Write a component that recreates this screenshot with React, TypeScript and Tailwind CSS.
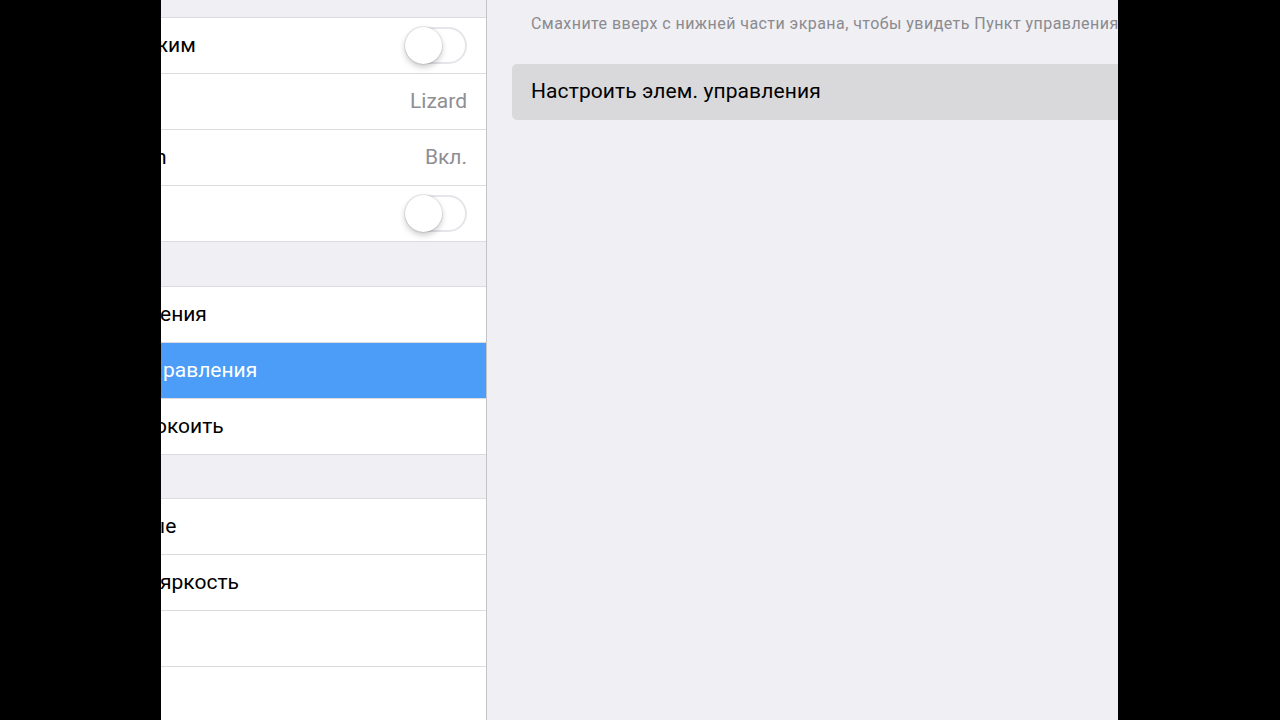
import React from "react";

const font = { fontFamily: "Roboto, 'Noto Sans', sans-serif" };

function Toggle() {
  return (
    <div className="relative h-[37px] w-[62px] rounded-full border-2 border-[#e5e5ea] bg-white">
      <div className="absolute left-[-2px] top-[-2px] h-[37px] w-[37px] rounded-full bg-white shadow-[0_3px_6px_rgba(0,0,0,0.22),0_0_0_1px_rgba(0,0,0,0.08)]" />
    </div>
  );
}

function Row({
  text,
  ml = "",
  value,
  toggle,
  active,
}: {
  text?: string;
  ml?: string;
  value?: string;
  toggle?: boolean;
  active?: boolean;
}) {
  return (
    <div
      className={`flex h-[56px] items-center justify-between border-b border-[#dcdce0] pr-[19px] ${
        active ? "bg-[#4c9df7]" : "bg-white"
      }`}
    >
      <span
        className={`whitespace-nowrap text-[21px] ${ml} ${active ? "text-white" : "text-black"}`}
      >
        {text}
      </span>
      {value && <span className="text-[21px] text-[#8e8e93]">{value}</span>}
      {toggle && <Toggle />}
    </div>
  );
}

export default function App() {
  return (
    <div className="flex h-[720px] w-[1280px] overflow-hidden bg-black" style={font}>
      <div className="w-[161px] shrink-0 bg-black" />
      <div className="flex w-[325px] shrink-0 flex-col overflow-hidden bg-[#efeff4]">
        <div className="h-[17px] shrink-0" />
        <div className="border-t border-[#dcdce0]">
          <Row text="жим" ml="ml-[-9px]" toggle />
          <Row text="" value="Lizard" />
          <Row text="h" ml="ml-[-6px]" value="Вкл." />
          <Row text="" toggle />
        </div>
        <div className="h-[44px] shrink-0" />
        <div className="border-t border-[#dcdce0]">
          <Row text="ения" ml="ml-[-1px]" />
          <Row text="равления" ml="ml-[2px]" active />
          <Row text="окоить" ml="ml-[-6px]" />
        </div>
        <div className="h-[43px] shrink-0" />
        <div className="border-t border-[#dcdce0]">
          <Row text="ые" ml="ml-[-12px]" />
          <Row text="яркость" ml="ml-[-1px]" />
          <Row text="" />
          <Row text="" />
        </div>
      </div>
      <div className="w-px shrink-0 bg-[#c4c4c8]" />
      <div className="flex w-[631px] shrink-0 flex-col overflow-hidden bg-[#efeff4]">
        <div className="h-[44px] whitespace-nowrap pl-[44px] pt-[12px] text-[16px] tracking-[0.45px] text-[#8a8a8f]">
          Смахните вверх с нижней части экрана, чтобы увидеть Пункт управления
        </div>
        <div className="ml-[25px] mt-[20px] flex h-[56px] items-center rounded-l-[5px] bg-[#d9d9db] pl-[19px] text-[21px] tracking-[0.1px] text-black">
          Настроить элем. управления
        </div>
      </div>
      <div className="flex-1 bg-black" />
    </div>
  );
}
